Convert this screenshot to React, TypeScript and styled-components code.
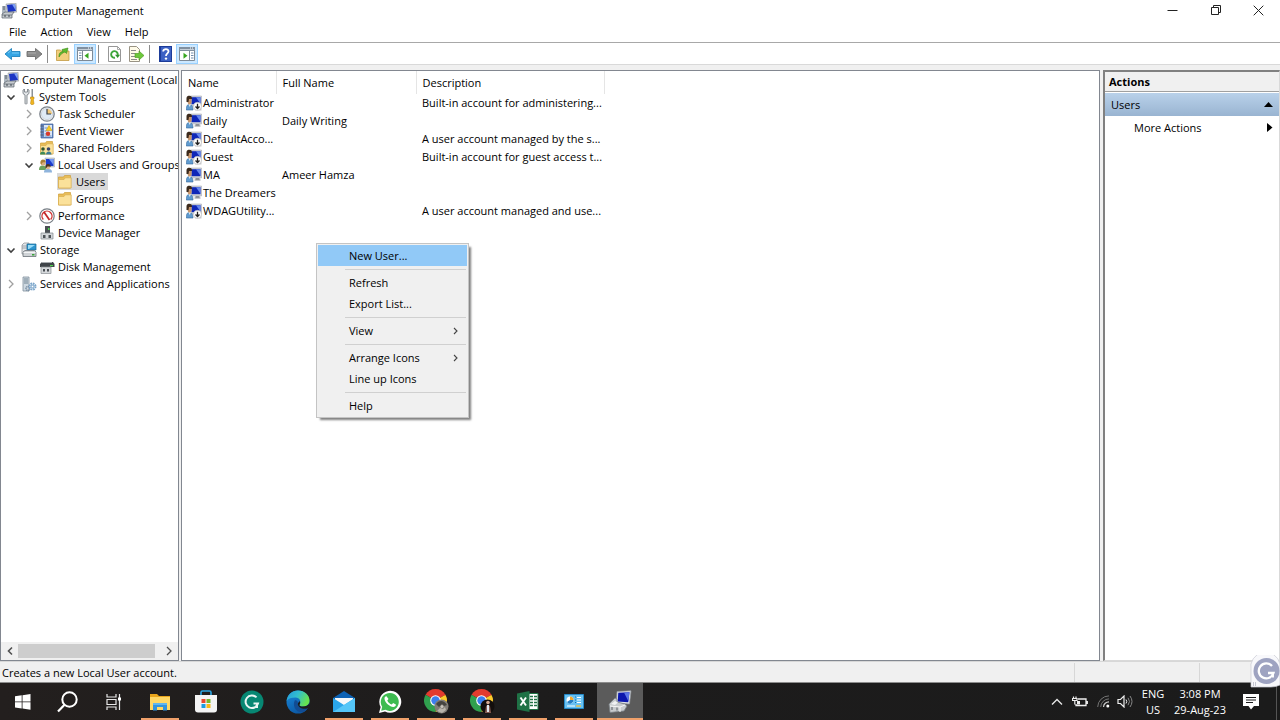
import React from "react";
import styled, { createGlobalStyle, css } from "styled-components";

const GlobalStyle = createGlobalStyle`
  *, *::before, *::after { box-sizing: border-box; }
  body {
    margin: 0;
    background: #f0f0f0;
    color: #000;
    font-family: "Open Sans", "Noto Sans", sans-serif;
    font-size: 11px;
    line-height: 16px;
  }
  button {
    font: inherit;
    color: inherit;
    background: none;
    border: 0;
    padding: 0;
    text-align: left;
  }
  ul { list-style: none; margin: 0; padding: 0; }
  svg { display: block; flex: none; }
`;

const Desktop = styled.div`
  position: relative;
  display: flex;
  flex-direction: column;
  min-height: 100vh;
  overflow: hidden;
`;

/* ---------- window frame ---------- */

const TitleBar = styled.header`
  display: flex;
  align-items: center;
  height: 22px;
  padding-left: 1px;
  background: #fff;
`;

const Title = styled.h1`
  flex: 1;
  margin: 0;
  padding-left: 4px;
  font-size: 11px;
  font-weight: 400;
`;

const WindowButton = styled.button`
  display: flex;
  align-items: center;
  justify-content: center;
  width: 43px;
  height: 20px;
`;

const MenuBar = styled.nav`
  display: flex;
  height: 21px;
  padding-left: 2px;
  background: #fff;
  border-bottom: 1px solid #a8a8a8;
`;

const MenuBarButton = styled.button`
  padding: 0 7px;
`;

const Toolbar = styled.div`
  display: flex;
  align-items: flex-end;
  height: 22px;
  padding-left: 1px;
  background: #fff;
  border-bottom: 1px solid #d9d9d9;
`;

const ToolButton = styled.button<{ $active?: boolean }>`
  display: flex;
  align-items: center;
  justify-content: center;
  width: 22px;
  height: 20px;
  ${(p) =>
    p.$active &&
    css`
      background: #cce8ff;
      border: 1px solid #99d1ff;
    `}
`;

const ToolDivider = styled.span`
  width: 1px;
  height: 18px;
  margin: 0 4px 1px 2px;
  background: #8c8c8c;
`;

const Panes = styled.main`
  display: flex;
  flex: 1;
  gap: 2px;
  padding-top: 5px;
`;

/* ---------- tree ---------- */

const TreePane = styled.nav`
  display: flex;
  flex-direction: column;
  flex: none;
  width: 179px;
  overflow: hidden;
  background: #fff;
  border: 1px solid #828790;
`;

const TreeList = styled.ul`
  flex: 1;
`;

const TreeRow = styled.li<{ $level: number }>`
  display: flex;
  align-items: center;
  height: 17px;
  padding-left: ${(p) => Math.max(p.$level - 1, 0) * 18 + 2}px;
  white-space: nowrap;
`;

const Expander = styled.button`
  display: flex;
  align-items: center;
  justify-content: center;
  flex: none;
  width: 16px;
  height: 16px;
  margin-right: 2px;
`;

const TreeLabel = styled.button<{ $selected?: boolean }>`
  display: flex;
  align-items: center;
  gap: 3px;
  height: 17px;
  padding-right: 3px;
  white-space: nowrap;
  background: ${(p) => (p.$selected ? "#d9d9d9" : "transparent")};
`;

const ScrollTrack = styled.div`
  display: flex;
  align-items: center;
  height: 18px;
  background: #f0f0f0;
`;

const ScrollArrow = styled.button`
  display: flex;
  align-items: center;
  justify-content: center;
  width: 17px;
  height: 17px;
`;

const ScrollThumb = styled.div`
  flex: none;
  width: 137px;
  height: 14px;
  margin-right: 5px;
  background: #cdcdcd;
`;

/* ---------- list ---------- */

const ListPane = styled.section`
  flex: 1;
  min-width: 0;
  margin-right: 1px;
  background: #fff;
  border: 1px solid #828790;
`;

const UserTable = styled.table`
  table-layout: fixed;
  width: 422px;
  border-collapse: collapse;
`;

const HeadCell = styled.th<{ $width: number }>`
  width: ${(p) => p.$width}px;
  height: 23px;
  padding: 0 5px 0 6px;
  font-weight: 400;
  text-align: left;
  border-right: 1px solid #e5e5e5;
`;

const BodyCell = styled.td`
  height: 18px;
  padding: 0 0 0 6px;
  white-space: nowrap;
`;

const NameCell = styled(BodyCell)`
  padding-left: 4px;
`;

const UserName = styled.span`
  display: flex;
  align-items: center;
  gap: 1px;
`;

/* ---------- actions ---------- */

const ActionsPane = styled.aside`
  flex: none;
  width: 177px;
  background: #fff;
  border: 1px solid #a0a0a0;
  border-width: 2px 1px 1px 2px;
  border-color: #808080 #d9d9d9 #d9d9d9 #808080;
`;

const ActionsTitle = styled.h2`
  height: 20px;
  margin: 0 0 1px;
  padding: 2px 4px;
  font-size: 11px;
  font-weight: 700;
  line-height: 16px;
  background: #f0f0f0;
  border-bottom: 1px solid #a0a0a0;
`;

const ActionRow = styled.button<{ $heading?: boolean }>`
  display: flex;
  align-items: center;
  justify-content: space-between;
  width: 100%;
  height: 23px;
  padding: 0 6px 0 ${(p) => (p.$heading ? 6 : 29)}px;
  background: ${(p) => (p.$heading ? "linear-gradient(#b9d1ea, #99b4d1)" : "none")};
`;

/* ---------- status bar ---------- */

const StatusBar = styled.footer`
  display: flex;
  align-items: center;
  height: 22px;
  padding-left: 2px;
  border-top: 1px solid #d7d7d7;
  border-bottom: 1px solid #8c8c8c;
`;

const StatusText = styled.span`
  flex: 1;
  padding-top: 1px;
`;

const StatusPart = styled.span<{ $width: number }>`
  width: ${(p) => p.$width}px;
  height: 19px;
  border-left: 1px solid #d7d7d7;
`;

/* ---------- context menu ---------- */

const ContextMenu = styled.div`
  position: absolute;
  left: 316px;
  top: 243px;
  width: 153px;
  padding: 1px;
  background: #f0f0f0;
  border: 1px solid #c4c4c4;
  box-shadow: 3px 3px 2px -1px rgba(0, 0, 0, 0.5);
`;

const ContextItem = styled.button<{ $active?: boolean }>`
  display: flex;
  align-items: center;
  justify-content: space-between;
  width: 100%;
  height: 21px;
  padding: 0 9px 0 31px;
  background: ${(p) => (p.$active ? "#91c9f7" : "transparent")};
`;

const ContextDivider = styled.hr`
  height: 1px;
  margin: 3px 1px 2px 27px;
  border: 0;
  background: #d0d0d0;
`;

/* ---------- taskbar ---------- */

const Taskbar = styled.footer`
  display: flex;
  height: 37px;
  color: #fff;
  background: linear-gradient(90deg, #231f1e, #1d1c1c 40%, #1b1b1b);
`;

const TaskButton = styled.button<{ $open?: boolean; $active?: boolean }>`
  position: relative;
  display: flex;
  align-items: center;
  justify-content: center;
  width: 46px;
  height: 37px;
  ${(p) => p.$active && "background: #5b5b5b;"}
  &:first-child { width: 45px; }
  ${(p) =>
    p.$open &&
    css`
      &::after {
        content: "";
        position: absolute;
        left: ${p.$active ? 0 : 4}px;
        right: ${p.$active ? 0 : 4}px;
        bottom: 0;
        height: 2px;
        background: #f0a06a;
      }
    `}
`;

const Tray = styled.div`
  display: flex;
  align-items: center;
  margin-left: auto;
`;

const TrayButton = styled.button<{ $width: number }>`
  display: flex;
  align-items: center;
  justify-content: center;
  width: ${(p) => p.$width}px;
  height: 37px;
  text-align: center;
`;

const ShowDesktop = styled.button`
  width: 4px;
  height: 37px;
  margin-left: 4px;
  border-left: 1px solid #555;
`;

const Assistant = styled.button`
  position: absolute;
  right: 0;
  bottom: 32px;
`;

/* ---------- icons ---------- */

const Computer = ({ size = 16 }: { size?: number }) => (
  <svg width={size} height={size} viewBox="0 0 16 16">
    <path d="M5 1l10-1 1 9-10 1z" fill="#c9cdd2" stroke="#8b9097" strokeWidth=".5" />
    <path d="M6 2l8-1 1 7-8 1z" fill="#1b35c4" />
    <path d="M11 1.300l3-.3 1 7z" fill="#7fa1f2" />
    <path d="M1 3h4v8H1z" fill="#aeb7c0" />
    <path d="M2 4h2M2 6h2" stroke="#56616b" />
    <path d="M1 11l3-2h9l-2 3v3H1z" fill="#c7cbcf" stroke="#59616a" strokeWidth=".7" />
    <path d="M1 12h10" stroke="#59616a" strokeWidth=".7" />
    <path d="M4 12v2M8 12v2" stroke="#3f474f" />
  </svg>
);

const Person = ({ badge }: { badge?: boolean }) => (
  <svg width="16" height="16" viewBox="0 0 16 16">
    <path d="M4.500 1h11v10h-11z" fill="#cfd2d8" stroke="#a9adb5" strokeWidth=".6" />
    <path d="M5.500 2.200h9v7h-9z" fill="#0f27b8" />
    <path d="M10 2.200h4.500v6.500z" fill="#6788ec" />
    <path d="M9.500 11h4v1.500h1v1h-6v-1h1z" fill="#8e9298" />
    <path d="M.3 15c0-4 .8-5.500 3-5.500S7 11 7 15z" fill="#5f9bd0" stroke="#33669a" strokeWidth=".6" />
    <path d="M2.500 9l1.200 3L5 9z" fill="#e9eff5" />
    <path d="M1.500 3.500h4v3.800Q5 9.500 3.500 9.500T1.500 7z" fill="#c8966c" />
    <path d="M.5 7V3.200C.5 1.400 2 .8 3.500.8S6.300 1.800 6 4H3L2.500 7z" fill="#3c2a1c" />
    {badge && (
      <>
        <path d="M9 9h6.500v6.500H9z" fill="#c9cbce" />
        <circle cx="11.500" cy="11.300" r="4" fill="#fff" stroke="#b5b5b5" strokeWidth=".6" />
        <path d="M11.500 8.800v4.500M9.500 11.500l2 2 2-2" stroke="#222" strokeWidth="1.300" fill="none" />
      </>
    )}
  </svg>
);

const Group = () => (
  <svg width="16" height="16" viewBox="0 0 16 16">
    <path d="M6 1h9.500v9H6z" fill="#d0d5da" stroke="#969ca3" strokeWidth=".5" />
    <path d="M7 2h7.500v7H7z" fill="#1b3ccc" />
    <path d="M10 2h4.500v6z" fill="#7598f2" />
    <path d="M0 13c0-3 1-4.500 3.500-4.500S7.500 10 7.500 13z" fill="#6ba05b" />
    <circle cx="4" cy="6" r="2.500" fill="#d9ab7d" />
    <path d="M1.500 6.500C1 3.500 2.500 2.500 4 2.500s3 1 2.700 3C4.500 5 3 5 2.500 7.500z" fill="#a87f35" />
    <path d="M5 15.500c0-3 1.500-3.500 4-3.500s4 .5 4 3.500z" fill="#8fb4dc" />
    <circle cx="9" cy="10" r="2.300" fill="#e0b48b" />
    <path d="M6.500 11C6 8 7.500 7 9 7s3 1 2.600 3C9.500 9.400 8 9.200 7.500 11z" fill="#4b3220" />
  </svg>
);

const Tools = () => (
  <svg width="15" height="16" viewBox="0 0 15 16">
    <path d="M2 1v3.500L4 6v8.500c0 .7 2 .7 2 0V6l2-1.500V1L6.500 0v3h-3V0z" fill="#e2e5e8" stroke="#70767c" strokeWidth=".8" />
    <path d="M10.500 0H12v8h-1.500z" fill="#8c9298" />
    <path d="M9.500 8H13v2l-.7.500.7 4c0 1.500-3.500 1.500-3.500 0l.7-4-.7-.5z" fill="#f0b51f" stroke="#b37a08" strokeWidth=".5" />
  </svg>
);

const Clock = () => (
  <svg width="16" height="16" viewBox="0 0 16 16">
    <circle cx="8" cy="8" r="7.200" fill="#f7f8fa" stroke="#7b828a" strokeWidth="1.300" />
    <circle cx="8" cy="8" r="5.600" fill="#dfeaf6" stroke="#c4ccd4" strokeWidth=".7" />
    <path d="M8 8V3a5 5 0 0 1 5 5z" fill="#f2c879" />
    <path d="M8 3v5h4" stroke="#39424c" strokeWidth="1.200" fill="none" />
  </svg>
);

const EventBook = () => (
  <svg width="16" height="16" viewBox="0 0 16 16">
    <path d="M2 1h12v14H2z" fill="#6488c4" stroke="#3f5f99" strokeWidth=".7" />
    <path d="M5 2h8v12H5z" fill="#dce8f7" />
    <path d="M1.500 3h3M1.500 6h3M1.500 9h3M1.500 12h3" stroke="#555f6e" />
    <path d="M5.500 5h3M5.500 8h2M5.500 11h2M5.500 13h7" stroke="#6b8fc9" />
    <path d="M10 2.500l3 5H7z" fill="#f9cc25" stroke="#be9307" strokeWidth=".5" />
    <circle cx="9" cy="10.800" r="2.200" fill="#d83a2b" />
  </svg>
);

const Folder = ({ shared }: { shared?: boolean }) => (
  <svg width="16" height="16" viewBox="0 0 16 16">
    <path d="M1.500 3h5l1-1.500h6V14h-12z" fill="#e9bd58" stroke="#cf9f38" strokeWidth=".7" />
    <path d="M1.500 5.500h5.500l1.200-1.700h6V14H1.500z" fill="#fbe19a" stroke="#d9ad4d" strokeWidth=".7" />
    {shared && (
      <>
        <circle cx="4" cy="9" r="1.800" fill="#30532f" />
        <path d="M1 14.500c0-4 5.500-4 5.500 0z" fill="#3f8a56" />
        <circle cx="9.500" cy="9" r="1.800" fill="#38456a" />
        <path d="M7 14.500c0-4 5.500-4 5.500 0z" fill="#3b7d94" />
      </>
    )}
  </svg>
);

const Gauge = () => (
  <svg width="16" height="16" viewBox="0 0 16 16">
    <circle cx="8" cy="8" r="7.200" fill="#fff" stroke="#777e85" strokeWidth="1.200" />
    <path d="M4.300 11.500a5 5 0 1 1 7.400 0" stroke="#cf3535" strokeWidth="1.400" fill="none" />
    <path d="M5 4l5.500 8" stroke="#c32727" strokeWidth="1.800" />
  </svg>
);

const DeviceIcon = () => (
  <svg width="16" height="16" viewBox="0 0 16 16">
    <path d="M6 1h5v8H6z" fill="#4b4f54" />
    <path d="M9 3h1.500v2H9z" fill="#4dd34d" />
    <path d="M2 8h12v6H2z" fill="#d4d7da" stroke="#83888d" strokeWidth=".7" />
    <path d="M4 10h2.500v3H4zM9.500 10H12v3H9.500z" fill="#4d5257" />
  </svg>
);

const StorageIcon = () => (
  <svg width="16" height="16" viewBox="0 0 16 16">
    <path d="M1 3l2-2h5v11H1z" fill="#e3e6e9" stroke="#858b91" strokeWidth=".7" />
    <path d="M1 4h6M1 6h6" stroke="#8d9399" strokeWidth=".8" />
    <path d="M6 2h9v6H6z" fill="#2d95cf" stroke="#176893" strokeWidth=".7" />
    <path d="M7 3h7L8 7H7z" fill="#98dcf8" />
    <path d="M2 10l2-1.500h9.500L15 10v4.500H2z" fill="#cfd3d6" stroke="#6b7177" strokeWidth=".8" />
    <path d="M2.500 10.500h12" stroke="#f3f4f5" />
    <path d="M11 12h2.500v1.500H11z" fill="#38a338" />
  </svg>
);

const DiskIcon = () => (
  <svg width="16" height="16" viewBox="0 0 16 16">
    <path d="M1 5l2-2h11l1.500 2v3H1z" fill="#3e4348" />
    <path d="M3 3.500h10" stroke="#a7abaf" />
    <path d="M11 6h3v1.200h-3z" fill="#4dd34d" />
    <path d="M2 8h10v6.500H2z" fill="#d6d9dc" stroke="#8a8f94" strokeWidth=".7" />
    <path d="M4 10h2v2.500H4zM8 10h2v2.500H8z" fill="#494e53" />
  </svg>
);

const ServicesIcon = () => (
  <svg width="16" height="16" viewBox="0 0 16 16">
    <path d="M2 1h6v14H2z" fill="#cfd9e1" stroke="#82909c" strokeWidth=".8" />
    <path d="M3 3h4M3 5h4M3 7h4" stroke="#728593" />
    <circle cx="7" cy="12.500" r="2" fill="none" stroke="#7a8fa3" strokeWidth="1.500" strokeDasharray="1.200 .5" />
    <circle cx="11.500" cy="10.500" r="3" fill="#e5f0f9" stroke="#7ba5ca" strokeWidth="2" strokeDasharray="1.600 .75" />
    <circle cx="11.500" cy="10.500" r="1.300" fill="#fff" stroke="#4c82b3" strokeWidth=".7" />
  </svg>
);

const Chevron = ({ open, color = "#a0a0a0", flip }: { open?: boolean; color?: string; flip?: boolean }) => (
  <svg width="10" height="10" viewBox="0 0 10 10">
    <path
      d={open ? "M1.500 3.500L5 7l3.500-3.500" : flip ? "M7 1.500L3.500 5 7 8.500" : "M3 1L7 5 3 9"}
      fill="none"
      stroke={color}
      strokeWidth={open || flip ? 1.6 : 1.3}
    />
  </svg>
);

const MenuArrow = () => (
  <svg width="5" height="8" viewBox="0 0 5 8">
    <path d="M1 1l3 3-3 3" fill="none" stroke="#444" strokeWidth="1.100" />
  </svg>
);

const ArrowIcon = ({ back }: { back?: boolean }) => (
  <svg width="17" height="14" viewBox="0 0 17 14">
    <path
      d={back ? "M1 7l6.500-5.500v3H16v5H7.500v3z" : "M16 7L9.500 1.500v3H1v5h8.500v3z"}
      fill={back ? "#35a5e4" : "#8c8c8c"}
      stroke={back ? "#2083bd" : "#6d6d6d"}
      strokeWidth=".9"
      strokeLinejoin="round"
    />
    <path d={back ? "M4 6l3-2.400M8 6h7" : "M2 6h8"} stroke={back ? "#7fd0f7" : "#b1b1b1"} strokeWidth=".9" />
  </svg>
);

const UpFolder = () => (
  <svg width="16" height="16" viewBox="0 0 16 16">
    <path d="M1.500 4h4l1 1H14v9.500H1.500z" fill="#f2cf7d" stroke="#c39a42" strokeWidth=".8" />
    <path d="M4 11c0-4 1-5 4-5.500L7 3.500 13 2l-1.500 5.500L10 6C7 7 6 8 4 11z" fill="#5fbb2e" stroke="#398a18" strokeWidth=".6" />
  </svg>
);

const PaneIcon = ({ right }: { right?: boolean }) => (
  <svg width="16" height="14" viewBox="0 0 16 14">
    <path d="M.5.5h15v13H.5z" fill="#fff" stroke="#7e8a96" />
    <path d="M0 0h16v4H0z" fill="#8190a0" />
    <path d="M1 2.500h14" stroke="#c5ced7" />
    <path d="M11 1h1M13 1h1" stroke="#fff" />
    <path d={right ? "M10.500 4v10" : "M5.500 4v10"} stroke="#7e8a96" />
    <path d={right ? "M12 6h2.500M12 8.500h2.500M12 11h2.500" : "M2 6h2.500M2 8.500h2.500M2 11h2.500"} stroke="#718cac" />
    <path d={right ? "M4.500 5.800v6L8.500 8.800z" : "M11.500 5.800v6L7.500 8.800z"} fill="#37a61f" />
  </svg>
);

const RefreshPage = () => (
  <svg width="13" height="16" viewBox="0 0 13 16">
    <path d="M.5.500h9l3 3v12H.5z" fill="#fff" stroke="#979797" />
    <path d="M9.500.500v3h3" fill="none" stroke="#979797" strokeWidth=".8" />
    <path d="M7 11.700A3.300 3.300 0 1 1 9.700 9" fill="none" stroke="#3da63b" strokeWidth="1.900" />
    <path d="M7 8.800h5L9.700 12z" fill="#2e942d" />
  </svg>
);

const ExportPage = () => (
  <svg width="16" height="16" viewBox="0 0 16 16">
    <path d="M1.500.500h7l3 3v12h-10z" fill="#fffbe9" stroke="#999384" />
    <path d="M3 4.500h5M3 7.500h4M3 10.500h4M3 13.500h6" stroke="#8c8c8c" />
    <path d="M7 7.500h4V5l5 4.500-5 4.500v-2.500H7z" fill="#6dc83b" stroke="#43931c" strokeWidth=".6" />
  </svg>
);

const HelpIcon = () => (
  <svg width="13" height="16" viewBox="0 0 13 16">
    <path d="M0 0h13v16H0z" fill="#1d3c99" />
    <path d="M2 1h10v14H2z" fill="#3c61c4" />
    <path d="M4.200 5.500C4 2.400 9.800 2.300 9.500 5.500 9.300 7.500 7 7.300 7 10" fill="none" stroke="#fff" strokeWidth="1.800" />
    <circle cx="7" cy="12.600" r="1.200" fill="#fff" />
  </svg>
);

const StartIcon = () => (
  <svg width="16" height="16" viewBox="0 0 16 16">
    <path d="M0 2.300L6.700 1.300v6.200H0zM7.500 1.200L15.500 0v7.500h-8zM0 8.300h6.700v6.200L0 13.600zM7.500 8.300h8v7.500l-8-1.200z" fill="#fff" />
  </svg>
);

const SearchIcon = () => (
  <svg width="22" height="22" viewBox="0 0 22 22">
    <circle cx="12.500" cy="8.500" r="7.200" fill="none" stroke="#fff" strokeWidth="2" />
    <path d="M7.500 13.800L1 20.500" stroke="#fff" strokeWidth="2.200" />
  </svg>
);

const TaskViewIcon = () => (
  <svg width="16" height="16" viewBox="0 0 16 16">
    <path d="M1 0v3h9V0M1 16v-3h9v3M1 5.500h9v5H1zM13.500 0v16" fill="none" stroke="#e8e8e8" strokeWidth="1.200" />
    <path d="M12 3.500h3v3h-3z" fill="#fff" />
  </svg>
);

const ExplorerIcon = () => (
  <svg width="22" height="18" viewBox="0 0 22 18">
    <path d="M1 1h7l2 2h11v4H1z" fill="#e9a51b" />
    <path d="M1 4h20v13H1z" fill="#ffd765" />
    <path d="M4 10h14v7.500h-4V14H8v3.500H4z" fill="#3293dd" />
    <path d="M4 10h14v2H4z" fill="#60b5ef" />
  </svg>
);

const StoreIcon = () => (
  <svg width="22" height="23" viewBox="0 0 22 23">
    <path d="M6 6V2.500c0-1 .5-1.500 1.500-1.500h7c1 0 1.500.5 1.500 1.500V6" fill="none" stroke="#2ba6e4" strokeWidth="1.600" />
    <path d="M0 5h22v14.500a3 3 0 0 1-3 3H3a3 3 0 0 1-3-3z" fill="#f4f4f4" />
    <path d="M6.500 9h4v4h-4z" fill="#e8492f" />
    <path d="M11.500 9h4v4h-4z" fill="#76b82a" />
    <path d="M6.500 14h4v4h-4z" fill="#1b9de2" />
    <path d="M11.500 14h4v4h-4z" fill="#f9b916" />
  </svg>
);

const GMark = ({ color }: { color: string }) => (
  <svg width="24" height="24" viewBox="0 0 24 24">
    <circle cx="12" cy="12" r="11.500" fill={color} />
    <path d="M16.500 7.400A6.300 6.300 0 1 0 18 13.500h-4.500" fill="none" stroke="#e9f5f3" strokeWidth="2" />
    <path d="M17 13.500v4.500" fill="none" stroke="#e9f5f3" strokeWidth="2" />
  </svg>
);

const EdgeIcon = () => (
  <svg width="24" height="24" viewBox="0 0 24 24">
    <defs>
      <linearGradient id="edgeTop" x1="0" y1="0" x2="1" y2=".4">
        <stop offset="0" stopColor="#2398dc" />
        <stop offset=".5" stopColor="#32bed0" />
        <stop offset="1" stopColor="#66e350" />
      </linearGradient>
      <linearGradient id="edgeLow" x1="0" y1="0" x2=".5" y2="1">
        <stop offset="0" stopColor="#1a8ade" />
        <stop offset="1" stopColor="#0c59a4" />
      </linearGradient>
    </defs>
    <circle cx="12" cy="12" r="11.500" fill="url(#edgeLow)" />
    <path d="M.6 11C1.500 4.500 6.200.5 12 .5c6.500 0 11.500 4.500 11.500 10 0 4-3 6-6.500 6-2.500 0-4-.8-3.500-1.800 2-3.200.5-7.200-4-7.200C5.500 7.500 2 8.500.6 11z" fill="url(#edgeTop)" />
    <path d="M9 10c-3 5 .5 12 6 12.200 3 0 5.500-2 6.800-4-5 1.800-9.500-.8-10-4C11.600 12.500 12.500 11 9 10z" fill="#124c93" />
    <path d="M11.800 14.200c0-1.500 1.300-2 1.700-3.200 1 1.500.8 2.700 0 3.700-.5 1 1 1.800 3.500 1.800 2.700 0 5.200-1.200 6.200-3.300.3 1.800-.2 3.600-1.400 5-5 1.800-9.500-.8-10-4z" fill="#1d1c1c" />
  </svg>
);

const MailIcon = () => (
  <svg width="24" height="22" viewBox="0 0 24 22">
    <path d="M1 7L12 0l11 7v5H1z" fill="#0c62b5" />
    <path d="M3 7h18v8H3z" fill="#f5f8fa" />
    <path d="M1 7l11 7 11-7v14H1z" fill="#2aa5ea" />
    <path d="M1 21L15 12l8-5v14z" fill="#54c6f8" />
  </svg>
);

const WhatsAppIcon = () => (
  <svg width="24" height="24" viewBox="0 0 24 24">
    <path d="M1 23l1.600-6A11 11 0 1 1 7 21.400z" fill="#fff" />
    <path d="M3.200 20.800l1-4A9 9 0 1 1 7.400 19.800z" fill="#3dbb50" />
    <path d="M8.500 6.200c-.7-.2-2 .7-2 2.300 0 4 5.500 8.500 8.700 8.500 1.600 0 2.900-1.200 2.700-2.400l-2.800-1.500-1.300 1.500c-2-.8-3.600-2.200-4.500-4.200l1.200-1.300z" fill="#fff" />
  </svg>
);

const ChromeIcon = ({ dark }: { dark?: boolean }) => (
  <svg width="25" height="25" viewBox="0 0 25 25">
    <path d="M11.500 11.500L1.600 5.800a11.400 11.400 0 0 1 19.800 0z" fill="#e33b2e" />
    <path d="M11.500 11.500L21.400 5.800a11.400 11.400 0 0 1-9.900 17.100z" fill="#fccb2b" />
    <path d="M11.500 11.500v11.400A11.400 11.400 0 0 1 1.600 5.800z" fill="#30a04e" />
    <path d="M11.500 6.200h10.200a11.400 11.400 0 0 0-.3-.5H11z" fill="#e33b2e" />
    <circle cx="11.500" cy="11.500" r="5.300" fill="#fff" />
    <circle cx="11.500" cy="11.500" r="4.200" fill="#3c7fee" />
    <circle cx="17.500" cy="17.500" r="7" fill={dark ? "#130e0c" : "#817d77"} />
    {dark ? (
      <>
        <circle cx="18" cy="13.500" r="1.800" fill="#d4a78e" />
        <path d="M15 24l1-7 2-1.500 2 1.500 1 7z" fill="#855b52" />
        <path d="M17 16h2v7h-2z" fill="#dfe7ee" />
      </>
    ) : (
      <>
        <path d="M12 15c3-4 8-4 11 1l-3 1-2-2-3 3z" fill="#454440" />
        <path d="M13 22l3-3 3 1 2-2 1 3-4 3z" fill="#b8b4ab" />
        <circle cx="18" cy="17.500" r="1.500" fill="#c9c5bc" />
      </>
    )}
  </svg>
);

const ExcelIcon = () => (
  <svg width="22" height="21" viewBox="0 0 22 21">
    <path d="M11 2.500h10v16H11z" fill="#fff" stroke="#217346" />
    <path d="M13 5.500h3M17 5.500h3M13 8.500h3M17 8.500h3M13 11.500h3M17 11.500h3M13 14.500h3M17 14.500h3" stroke="#217346" strokeWidth="1.400" />
    <path d="M0 2.500L12.500 0v21L0 18.500z" fill="#1f7145" />
    <path d="M3.500 6.500l5.500 8M9 6.500l-5.500 8" stroke="#fff" strokeWidth="1.900" />
  </svg>
);

const ControlPanelIcon = () => (
  <svg width="20" height="15" viewBox="0 0 20 15">
    <path d="M.5.500h19v14H.5z" fill="#68c1f2" stroke="#2689c7" />
    <circle cx="6" cy="6" r="3.500" fill="#fff" />
    <path d="M6 6V2.500A3.500 3.500 0 0 1 9.500 6z" fill="#f4a82d" />
    <path d="M6 6h3.500A3.500 3.500 0 0 1 3 8z" fill="#247cc2" />
    <path d="M13 3.500h4M13 6h4M13 8.500h4M3 12h8" stroke="#fff" strokeWidth="1.200" />
    <path d="M12 12h5" stroke="#f4c243" strokeWidth="1.400" />
    <path d="M11 3h1M11 6h1M11 8.500h1" stroke="#176da8" />
  </svg>
);

const ManagementIcon = () => (
  <svg width="24" height="24" viewBox="0 0 24 24">
    <path d="M9 1.500L23 .8 21.500 14 8.500 13z" fill="#dde0e4" stroke="#949aa1" strokeWidth=".7" />
    <path d="M10.300 2.800l11.200-.6L20.200 12.300l-10.500-.8z" fill="#0b17ad" />
    <path d="M16 2.500l5.500-.3-1.100 9z" fill="#5974e6" />
    <path d="M1 14l6-6 2 1v3l8 2 2 2-3 5-14 1.500z" fill="#c7cacd" stroke="#777d83" strokeWidth=".8" />
    <path d="M2 16l10 1 5-2M12 17v5" fill="none" stroke="#f5f5f5" />
    <path d="M3 14l4-3 3 1.500L7 15z" fill="#f0f2f3" />
    <path d="M4 17v3M9 17.500v3" stroke="#6a7076" strokeWidth="1.200" />
  </svg>
);

const ChevronUp = () => (
  <svg width="12" height="8" viewBox="0 0 12 8">
    <path d="M1 6.500l5-5 5 5" fill="none" stroke="#e6e6e6" strokeWidth="1.400" />
  </svg>
);

const BatteryIcon = () => (
  <svg width="16" height="12" viewBox="0 0 16 12">
    <path d="M6 3h8v6.500H4V8M15.300 5v3" fill="none" stroke="#eee" strokeWidth="1.300" />
    <path d="M5 5h3v3.500H5z" fill="#eee" />
    <path d="M1.500.5v2M4 .5v2M.5 2.500h4.500v2H.5zM2.800 4v4.500" stroke="#eee" fill="none" strokeWidth="1.200" />
  </svg>
);

const WifiIcon = () => (
  <svg width="13" height="13" viewBox="0 0 13 13">
    <path d="M.7 12A11.300 11.300 0 0 1 12 .9M3.700 12A8.300 8.300 0 0 1 12 3.900" fill="none" stroke="#747474" />
    <path d="M6.500 12A5.500 5.500 0 0 1 12 6.800" fill="none" stroke="#ccc" strokeWidth="1.200" />
    <circle cx="10.800" cy="11" r="1.500" fill="#fff" />
  </svg>
);

const SoundIcon = () => (
  <svg width="16" height="13" viewBox="0 0 16 13">
    <path d="M1 4.500h2.500L7 1v11L3.500 8.500H1z" fill="none" stroke="#eee" strokeWidth="1.200" />
    <path d="M9 4.500q1.500 2 0 4" fill="none" stroke="#eee" />
    <path d="M11 2.800q3 3.700 0 7.400M13 1q4 5.500 0 11" fill="none" stroke="#888" />
  </svg>
);

const NoticeIcon = () => (
  <svg width="16" height="16" viewBox="0 0 16 16">
    <path d="M0 0h16v12h-5l-3 3.500L5.500 12H0z" fill="#fff" />
    <path d="M3 3.500h10M3 6h10M3 8.500h7" stroke="#1b1b1b" />
  </svg>
);

const AssistantIcon = () => (
  <svg width="30" height="33" viewBox="0 0 30 33">
    <path d="M1 32V15A14.500 14.500 0 0 1 30 9v21q-4 2-9 2z" fill="#f8f8fb" stroke="#c9cad3" strokeWidth=".7" />
    <circle cx="16.500" cy="16" r="13" fill="#9ea3c1" />
    <path d="M22 11A7.500 7.500 0 1 0 23.500 18h-5.500" fill="none" stroke="#fff" strokeWidth="2.300" />
    <path d="M22.800 17.500v5" fill="none" stroke="#fff" strokeWidth="2.300" />
    <path d="M3.500 27v4M5.500 27v4" stroke="#c6c7d2" />
  </svg>
);

/* ---------- data ---------- */

type TreeNode = {
  label: string;
  level: number;
  icon: React.ReactNode;
  state?: "open" | "closed";
  selected?: boolean;
};

const tree: TreeNode[] = [
  { label: "Computer Management (Local", level: 0, icon: <Computer /> },
  { label: "System Tools", level: 1, icon: <Tools />, state: "open" },
  { label: "Task Scheduler", level: 2, icon: <Clock />, state: "closed" },
  { label: "Event Viewer", level: 2, icon: <EventBook />, state: "closed" },
  { label: "Shared Folders", level: 2, icon: <Folder shared />, state: "closed" },
  { label: "Local Users and Groups", level: 2, icon: <Group />, state: "open" },
  { label: "Users", level: 3, icon: <Folder />, selected: true },
  { label: "Groups", level: 3, icon: <Folder /> },
  { label: "Performance", level: 2, icon: <Gauge />, state: "closed" },
  { label: "Device Manager", level: 2, icon: <DeviceIcon /> },
  { label: "Storage", level: 1, icon: <StorageIcon />, state: "open" },
  { label: "Disk Management", level: 2, icon: <DiskIcon /> },
  { label: "Services and Applications", level: 1, icon: <ServicesIcon />, state: "closed" },
];

const users = [
  { name: "Administrator", full: "", desc: "Built-in account for administering...", disabled: true },
  { name: "daily", full: "Daily Writing", desc: "", disabled: false },
  { name: "DefaultAcco...", full: "", desc: "A user account managed by the s...", disabled: true },
  { name: "Guest", full: "", desc: "Built-in account for guest access t...", disabled: true },
  { name: "MA", full: "Ameer Hamza", desc: "", disabled: false },
  { name: "The Dreamers", full: "", desc: "", disabled: false },
  { name: "WDAGUtility...", full: "", desc: "A user account managed and use...", disabled: true },
];

const contextGroups = [
  [{ label: "New User...", active: true }],
  [{ label: "Refresh" }, { label: "Export List..." }],
  [{ label: "View", submenu: true }],
  [{ label: "Arrange Icons", submenu: true }, { label: "Line up Icons" }],
  [{ label: "Help" }],
] as { label: string; active?: boolean; submenu?: boolean }[][];

const tasks: { label: string; icon: React.ReactNode; open?: boolean; active?: boolean }[] = [
  { label: "Start", icon: <StartIcon /> },
  { label: "Search", icon: <SearchIcon /> },
  { label: "Task View", icon: <TaskViewIcon /> },
  { label: "File Explorer", icon: <ExplorerIcon />, open: true },
  { label: "Microsoft Store", icon: <StoreIcon /> },
  { label: "Grammarly", icon: <GMark color="#078773" /> },
  { label: "Microsoft Edge", icon: <EdgeIcon /> },
  { label: "Mail", icon: <MailIcon />, open: true },
  { label: "WhatsApp", icon: <WhatsAppIcon />, open: true },
  { label: "Chrome, first profile", icon: <ChromeIcon />, open: true },
  { label: "Chrome, second profile", icon: <ChromeIcon dark />, open: true },
  { label: "Excel", icon: <ExcelIcon />, open: true },
  { label: "Control Panel", icon: <ControlPanelIcon />, open: true },
  { label: "Computer Management", icon: <ManagementIcon />, open: true, active: true },
];

export default function App() {
  return (
    <Desktop>
      <GlobalStyle />
      <TitleBar>
        <Computer />
        <Title>Computer Management</Title>
        <WindowButton aria-label="Minimize">
          <svg width="11" height="11" viewBox="0 0 11 11"><path d="M.5 4.500h10" stroke="#222" /></svg>
        </WindowButton>
        <WindowButton aria-label="Restore">
          <svg width="10" height="12" viewBox="0 0 10 12">
            <path d="M.5 2.500h7v7h-7zM2.500 2.500v-2h7v7h-2" fill="none" stroke="#222" />
          </svg>
        </WindowButton>
        <WindowButton aria-label="Close">
          <svg width="11" height="13" viewBox="0 0 11 13"><path d="M.7.7l9.600 9.600M10.300.7L.7 10.300" stroke="#222" /></svg>
        </WindowButton>
      </TitleBar>

      <MenuBar aria-label="Menu bar">
        {["File", "Action", "View", "Help"].map((label) => (
          <MenuBarButton key={label}>{label}</MenuBarButton>
        ))}
      </MenuBar>

      <Toolbar>
        <ToolButton aria-label="Back"><ArrowIcon back /></ToolButton>
        <ToolButton aria-label="Forward"><ArrowIcon /></ToolButton>
        <ToolDivider />
        <ToolButton aria-label="Up one level"><UpFolder /></ToolButton>
        <ToolButton aria-label="Show or hide console tree" $active><PaneIcon /></ToolButton>
        <ToolDivider />
        <ToolButton aria-label="Refresh"><RefreshPage /></ToolButton>
        <ToolButton aria-label="Export list"><ExportPage /></ToolButton>
        <ToolDivider />
        <ToolButton aria-label="Help"><HelpIcon /></ToolButton>
        <ToolButton aria-label="Show or hide action pane" $active><PaneIcon right /></ToolButton>
      </Toolbar>

      <Panes>
        <TreePane aria-label="Console tree">
          <TreeList>
            {tree.map((node) => (
              <TreeRow key={node.label} $level={node.level}>
                {node.level > 0 && (
                  <Expander
                    as={node.state ? "button" : "span"}
                    aria-label={node.state ? `Toggle ${node.label}` : undefined}
                  >
                    {node.state && (
                      <Chevron open={node.state === "open"} color={node.state === "open" ? "#404040" : "#a0a0a0"} />
                    )}
                  </Expander>
                )}
                <TreeLabel $selected={node.selected}>
                  {node.icon}
                  {node.label}
                </TreeLabel>
              </TreeRow>
            ))}
          </TreeList>
          <ScrollTrack>
            <ScrollArrow aria-label="Scroll left"><Chevron flip color="#505050" /></ScrollArrow>
            <ScrollThumb />
            <ScrollArrow aria-label="Scroll right"><Chevron color="#505050" /></ScrollArrow>
          </ScrollTrack>
        </TreePane>

        <ListPane>
          <UserTable>
            <thead>
              <tr>
                <HeadCell $width={94}>Name</HeadCell>
                <HeadCell $width={140}>Full Name</HeadCell>
                <HeadCell $width={188}>Description</HeadCell>
              </tr>
            </thead>
            <tbody>
              {users.map((user) => (
                <tr key={user.name}>
                  <NameCell>
                    <UserName>
                      <Person badge={user.disabled} />
                      {user.name}
                    </UserName>
                  </NameCell>
                  <BodyCell>{user.full}</BodyCell>
                  <BodyCell>{user.desc}</BodyCell>
                </tr>
              ))}
            </tbody>
          </UserTable>
        </ListPane>

        <ActionsPane>
          <ActionsTitle>Actions</ActionsTitle>
          <ActionRow $heading>
            Users
            <svg width="9" height="5" viewBox="0 0 9 5"><path d="M0 5l4.500-5L9 5z" /></svg>
          </ActionRow>
          <ActionRow>
            More Actions
            <svg width="6" height="9" viewBox="0 0 6 9"><path d="M0 0l5.500 4.500L0 9z" /></svg>
          </ActionRow>
        </ActionsPane>
      </Panes>

      <StatusBar>
        <StatusText>Creates a new Local User account.</StatusText>
        <StatusPart $width={125} />
        <StatusPart $width={81} />
      </StatusBar>

      <Taskbar>
        {tasks.map((task) => (
          <TaskButton key={task.label} aria-label={task.label} $open={task.open} $active={task.active}>
            {task.icon}
          </TaskButton>
        ))}
        <Tray>
          <TrayButton $width={22} aria-label="Show hidden icons"><ChevronUp /></TrayButton>
          <TrayButton $width={24} aria-label="Battery"><BatteryIcon /></TrayButton>
          <TrayButton $width={22} aria-label="Network"><WifiIcon /></TrayButton>
          <TrayButton $width={22} aria-label="Volume"><SoundIcon /></TrayButton>
          <TrayButton $width={34}>ENG<br />US</TrayButton>
          <TrayButton $width={60}>3:08 PM<br />29-Aug-23</TrayButton>
          <TrayButton $width={42} aria-label="Notifications"><NoticeIcon /></TrayButton>
          <ShowDesktop aria-label="Show desktop" />
        </Tray>
      </Taskbar>

      <ContextMenu role="menu">
        {contextGroups.map((group, index) => (
          <React.Fragment key={group[0].label}>
            {index > 0 && <ContextDivider />}
            {group.map((item) => (
              <ContextItem key={item.label} role="menuitem" $active={item.active}>
                {item.label}
                {item.submenu && <MenuArrow />}
              </ContextItem>
            ))}
          </React.Fragment>
        ))}
      </ContextMenu>

      <Assistant aria-label="Writing assistant"><AssistantIcon /></Assistant>
    </Desktop>
  );
}
